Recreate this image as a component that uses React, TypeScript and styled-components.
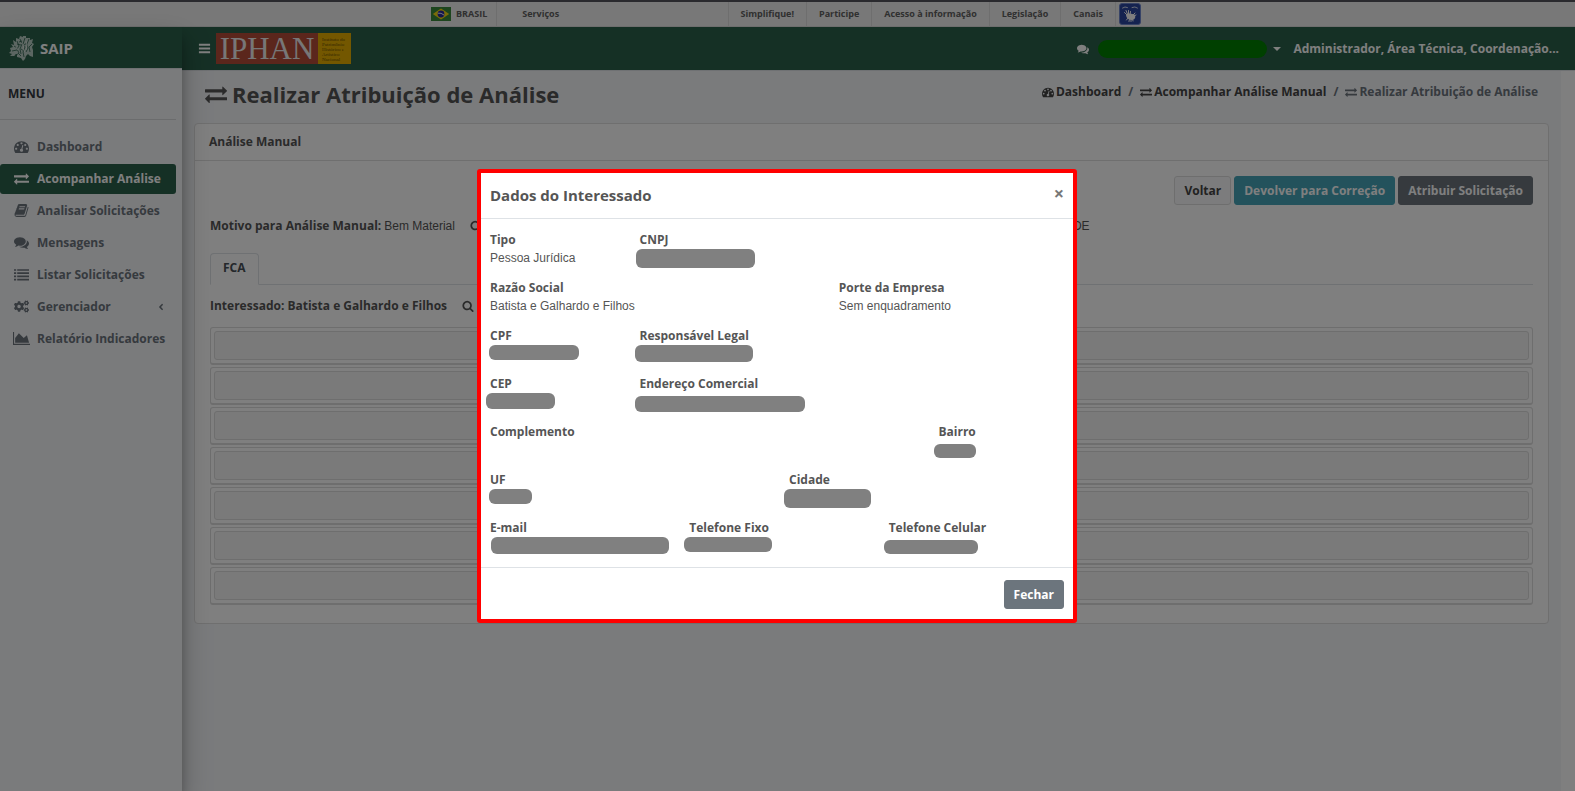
import React from "react";
import styled, { createGlobalStyle } from "styled-components";
import { FaCogs, FaAngleLeft } from "react-icons/fa";

const GlobalStyle = createGlobalStyle`
  *, *::before, *::after { box-sizing: border-box; }
  body {
    margin: 0;
    background: #fff;
    color: #555;
    font: 700 12px/18px "Open Sans", "Liberation Sans", sans-serif;
  }
  h1, h2, p, ul, ol, dl, dt, dd { margin: 0; padding: 0; }
  ul, ol { list-style: none; }
  a { color: inherit; text-decoration: none; }
  button { font: inherit; cursor: pointer; }
`;

/* ---------- icons ---------- */

const Glyph = styled.svg<{ $size: number }>`
  display: block;
  flex: none;
  height: ${(p) => p.$size}px;
  width: auto;
  fill: currentColor;
`;

const paths = {
  exchange:
    "M1792 1184v192q0 13-9.5 22.5t-22.5 9.5h-1376v192q0 13-9.5 22.5t-22.5 9.5q-12 0-24-10l-319-320q-9-9-9-22 0-14 9-23l320-320q9-9 23-9 13 0 22.5 9.5t9.5 22.5v192h1376q13 0 22.5 9.5t9.5 22.5zm0-544q0 14-9 23l-320 320q-9 9-23 9-13 0-22.5-9.5t-9.5-22.5v-192h-1376q-13 0-22.5-9.5t-9.5-22.5v-192q0-13 9.5-22.5t22.5-9.5h1376v-192q0-14 9-23t23-9q12 0 24 10l319 319q9 9 9 23z",
  dashboard:
    "M384 1152q0-53-37.5-90.5t-90.5-37.5-90.5 37.5-37.5 90.5 37.5 90.5 90.5 37.5 90.5-37.5 37.5-90.5zm192-448q0-53-37.5-90.5t-90.5-37.5-90.5 37.5-37.5 90.5 37.5 90.5 90.5 37.5 90.5-37.5 37.5-90.5zm428 481l101-382q6-26-7.5-48.5t-38.5-29.5-48 6.5-30 39.5l-101 382q-60 5-107 43.5t-63 98.5q-20 77 20 146t117 89 146-20 89-117q16-60-6-117t-72-91zm660-33q0-53-37.5-90.5t-90.5-37.5-90.5 37.5-37.5 90.5 37.5 90.5 90.5 37.5 90.5-37.5 37.5-90.5zm-640-640q0-53-37.5-90.5t-90.5-37.5-90.5 37.5-37.5 90.5 37.5 90.5 90.5 37.5 90.5-37.5 37.5-90.5zm448 192q0-53-37.5-90.5t-90.5-37.5-90.5 37.5-37.5 90.5 37.5 90.5 90.5 37.5 90.5-37.5 37.5-90.5zm320 448q0 261-141 483-19 29-54 29h-1402q-35 0-54-29-141-221-141-483 0-182 71-348t191-286 286-191 348-71 348 71 286 191 191 286 71 348z",
  book: "M1703 478q40 57 18 129l-275 906q-19 64-76.5 107.5t-122.5 43.5h-923q-77 0-148.5-53.5t-99.5-131.5q-24-67-2-127 0-4 3-27t4-37q1-8-3-21.5t-3-19.5q2-11 8-21t16.5-23.5 16.5-23.5q23-38 45-91.5t30-91.5q3-10 .5-30t-.5-28q3-11 17-28t17-23q21-36 42-92t25-90q1-9-2.5-32t.5-28q4-13 22-30.5t22-22.5q19-26 42.5-84.5t27.5-96.5q1-8-3-25.5t-2-26.5q2-8 9-18t18-23 17-21q8-12 16.5-30.5t15-35 16-36 19.5-32 26.5-23.5 36-11.5 47.5 5.5l-1 3q38-9 51-9h761q74 0 114 56t18 130l-274 906q-36 119-71.5 153.5t-128.5 34.5h-869q-27 0-38 15-11 16-1 43 24 70 144 70h923q29 0 56-15.5t35-41.5l300-987q7-22 5-57 38 15 59 43zm-1064 2q-4 13 2 22.5t20 9.5h608q13 0 25.5-9.5t16.5-22.5l21-64q4-13-2-22.5t-20-9.5h-608q-13 0-25.5 9.5t-16.5 22.5zm-83 256q-4 13 2 22.5t20 9.5h608q13 0 25.5-9.5t16.5-22.5l21-64q4-13-2-22.5t-20-9.5h-608q-13 0-25.5 9.5t-16.5 22.5z",
  comments:
    "M1408 768q0 139-94 257t-256.5 186.5-353.5 68.5q-86 0-176-16-124 88-278 128-36 9-86 16h-3q-11 0-20.5-8t-11.5-21q-1-3-1-6.5t.5-6.5 2-6l2.5-5 3.5-5.5 4-5 4.5-5 4-4.5q5-6 23-25t26-29.5 22.5-29 25-38.5 20.5-44q-124-72-195-177t-71-224q0-139 94-257t256.5-186.5 353.5-68.5 353.5 68.5 256.5 186.5 94 257zm384 256q0 120-71 224.5t-195 176.5q10 24 20.5 44t25 38.5 22.5 29 26 29.5 23 25q1 1 4 4.5t4.5 5 4 5 3.5 5.5l2.5 5 2 6 .5 6.5-1 6.5q-3 14-13 22t-22 7q-50-7-86-16-154-40-278-128-90 16-176 16-271 0-472-132 58 4 88 4 161 0 309-45t264-129q125-92 192-212t67-254q0-77-23-152 129 71 204 178t75 230z",
  search:
    "M1216 832q0-185-131.5-316.5t-316.5-131.5-316.5 131.5-131.5 316.5 131.5 316.5 316.5 131.5 316.5-131.5 131.5-316.5zm512 832q0 52-38 90t-90 38q-54 0-90-38l-343-342q-179 124-399 124-143 0-273.5-55.5t-225-150-150-225-55.5-273.5 55.5-273.5 150-225 225-150 273.5-55.5 273.5 55.5 225 150 150 225 55.5 273.5q0 220-124 399l343 343q37 37 37 90z",
  list: "M0 256h256v192h-256zM384 256h1408v192h-1408zM0 640h256v192h-256zM384 640h1408v192h-1408zM0 1024h256v192h-256zM384 1024h1408v192h-1408zM0 1408h256v192h-256zM384 1408h1408v192h-1408z",
  chart: "M2048 1536v128h-2048v-1536h128v1408h1920zm-384-1024l256 896h-1664v-576l448-576 576 576z",
  bars: "M128 256h1536v256h-1536zM128 768h1536v256h-1536zM128 1280h1536v256h-1536z",
};

type IconName = keyof typeof paths;

const Icon = ({ name, size = 13 }: { name: IconName; size?: number }) => (
  <Glyph $size={size} viewBox={name === "chart" ? "0 0 2048 1792" : "0 0 1792 1792"} aria-hidden="true">
    <path d={paths[name]} />
  </Glyph>
);

const Flag = () => (
  <Glyph $size={14} viewBox="0 0 20 14" aria-hidden="true">
    <rect width="20" height="14" fill="#3a8b3c" />
    <path d="M10 1.5 18.2 7 10 12.5 1.8 7z" fill="#f5d812" />
    <circle cx="10" cy="7" r="3.4" fill="#2a2a9c" />
    <path d="M6.8 6.2q3.4-.7 6.3 1.9" stroke="#fff" strokeWidth=".9" fill="none" />
  </Glyph>
);

const Crest = () => (
  <Glyph $size={26} viewBox="0 0 26 26" aria-hidden="true">
    <path
      fill="#b9cdc4"
      d="M14 1l3 0 0 2 4 0 0 2 3-1-1 4 2 1-2 3 1 3 0 7-3-1-2-2-2 2-1 3-2 2-2-3-4-1 0-3-3 2-4 0 2-2-3-1 2-2-1-3 3-1-2-3 3 1-1-5 3 2 0-4 3 1 1-3 3 1z"
    />
    <path
      fill="none"
      stroke="#2b604b"
      strokeWidth=".8"
      d="M8 6l2 5-2 3 2 4M5 11l3 2M3 16l5-1M11 4l2 5-2 5 1 5M16 3l-2 6 2 3-2 5 1 5M20 4l-2 5 1 4-2 4M23 9l-3 3 1 5M12 14l3 2M9 18l3 3M6 20l3-1M18 8l-3 2M8 9l4 1M10 7l3-1"
    />
    <path fill="none" stroke="#e6ece9" strokeWidth=".8" d="M12 8l3 2-1 4 2 3M17 6l1 4-1 5M7 12l2 3" />
  </Glyph>
);

const SignHands = () => (
  <Glyph $size={20} viewBox="0 0 20 20" aria-hidden="true">
    <g fill="none" stroke="#fff" strokeLinecap="round">
      <path strokeWidth=".8" d="M2.500 4q2.500-2 5-.5M12 3.500q3-1.500 5.500.5" />
      <path strokeWidth="1" d="M7 11 4.500 8.500M7.500 10 6 6.500M8.500 10V6.500M10 11l.5-3.500M13 11l2-2M14 12l2-1" />
      <path strokeWidth="1" d="M8 14l-1.500 2M9.500 14.500l-.5 3M11 14.500v3M12.500 14.500l.5 2.500" />
    </g>
    <path fill="#fff" d="M6 11q1-2 4-1.500l4.500 1q1.500 2 0 4.500-2.500 1.500-5 .5T6.500 13z" />
  </Glyph>
);

/* ---------- government bar ---------- */

const Page = styled.div`
  display: flex;
  flex-direction: column;
  min-height: 100vh;
`;

const GovBar = styled.header`
  display: flex;
  justify-content: center;
  height: 27px;
  border-top: 2px solid #55555c;
  border-bottom: 1px solid #dcdcdc;
  background: #f1f1f1;
  color: #606060;
  font-size: 9px;
  line-height: 24px;
`;

const GovInner = styled.div`
  display: flex;
  flex: 0 1 710px;
  justify-content: space-between;
  margin-right: 3px;
`;

const GovGroup = styled.nav`
  display: flex;
  align-items: stretch;
`;

const GovLink = styled.a<{ $brand?: boolean }>`
  display: flex;
  align-items: center;
  gap: 5px;
  padding: ${(p) => (p.$brand ? "0 9px 0 0" : "0 12px")};
  border-${(p) => (p.$brand ? "right" : "left")}: 1px solid #dcdcdc;
`;

const GovService = styled.a`
  margin-left: 25px;
`;

const Libras = styled.a`
  display: flex;
  align-items: center;
  justify-content: center;
  width: 22px;
  height: 22px;
  margin: 1px 0 0 3px;
  border: 1px solid #6f86cc;
  border-radius: 3px;
  background: #2a46a0;
`;

const GovEnd = styled.div`
  display: flex;
  border-left: 1px solid #dcdcdc;
`;

/* ---------- sidebar ---------- */

const Shell = styled.div`
  display: flex;
  flex: 1;
`;

const Sidebar = styled.aside`
  position: relative;
  flex: 0 0 182px;
  min-width: 0;
  background: #f4f6f9;
  box-shadow: 0 14px 28px rgba(0, 0, 0, 0.25), 0 10px 10px rgba(0, 0, 0, 0.22);
`;

const Brand = styled.a`
  display: flex;
  align-items: center;
  gap: 5px;
  height: 42px;
  padding-left: 9px;
  border-bottom: 1px solid #dee2e6;
  background: #2b604b;
  color: #fff;
  font-size: 15px;
`;

const MenuTitle = styled.p`
  margin-right: 6px;
  padding: 15px 8px;
  border-bottom: 1px solid #d6d8db;
  color: #343a40;
  line-height: 20px;
`;

const Menu = styled.ul`
  display: flex;
  flex-direction: column;
  gap: 2px;
  margin: 12px 6px 0 0;
`;

const MenuLink = styled.a<{ $active?: boolean }>`
  display: flex;
  align-items: center;
  height: 30px;
  padding: 0 10px 0 14px;
  border-radius: ${(p) => (p.$active ? "3px" : "0")};
  background: ${(p) => (p.$active ? "#2b604b" : "transparent")};
  color: ${(p) => (p.$active ? "#fff" : "#6c757d")};
  white-space: nowrap;
`;

const MenuIcon = styled.span`
  display: flex;
  justify-content: center;
  flex: 0 0 15px;
  width: 15px;
  margin: 0 8px 2px 0;
  font-size: 15px;
`;

const MenuArrow = styled.span`
  display: flex;
  margin-left: auto;
  font-size: 10px;
`;

/* ---------- main column ---------- */

const Main = styled.div`
  display: flex;
  flex: 1;
  flex-direction: column;
  min-width: 0;
`;

const Navbar = styled.div`
  display: flex;
  align-items: center;
  height: 44px;
  padding: 0 16px 0 16px;
  border-bottom: 1px solid #dee2e6;
  background: #2b604b;
  color: #fff;
`;

const IconButton = styled.button`
  display: flex;
  padding: 0;
  border: 0;
  background: none;
  color: inherit;
`;

const Logo = styled.a`
  display: flex;
  height: 31px;
  margin-left: 5px;
`;

const LogoName = styled.span`
  width: 102px;
  background: #b64c38;
  color: #eee;
  text-align: center;
  font: 400 31px/32px "Liberation Serif", serif;
`;

const LogoNote = styled.span`
  width: 33px;
  padding: 4px 0 0 4px;
  background: #e6ae00;
  color: #6b4f00;
  font: 400 5px/5px "Liberation Serif", serif;
  white-space: pre-line;
`;

const NavEnd = styled.div`
  display: flex;
  align-items: center;
  margin-left: auto;
`;

const UserButton = styled.button`
  display: flex;
  align-items: center;
  gap: 6px;
  margin: 0 12px 0 9px;
  padding: 0;
  border: 0;
  background: none;
  color: inherit;
`;

const UserMask = styled.span`
  width: 169px;
  height: 18px;
  border-radius: 9px;
  background: #008000;
`;

const Caret = styled.span`
  border: 4px solid transparent;
  border-top-color: currentColor;
  border-bottom: 0;
`;

const Content = styled.main`
  flex: 1;
  margin-right: 14px;
  padding: 8px 12px 0 12px;
  background: #f4f6f9;
`;

const PageHead = styled.div`
  display: flex;
  align-items: flex-start;
  justify-content: space-between;
  height: 44px;
  padding: 0 11px;
`;

const PageTitle = styled.h1`
  display: flex;
  align-items: center;
  gap: 5px;
  font-size: 22px;
  line-height: 30px;
`;

const Crumbs = styled.ol`
  display: flex;
  margin-top: 4px;
`;

const Crumb = styled.li<{ $current?: boolean }>`
  display: flex;
  align-items: center;
  color: ${(p) => (p.$current ? "#6c757d" : "#444")};

  &:not(:first-child)::before {
    content: "/";
    padding: 0 7px;
    color: #6c757d;
  }
`;

const CrumbLink = styled.a`
  display: flex;
  align-items: center;
  gap: 2px;
`;

const Card = styled.section`
  border: 1px solid #dfdfdf;
  border-radius: 4px;
  background: #fff;
`;

const CardHeader = styled.h2`
  padding: 9px 14px;
  border-bottom: 1px solid #dfdfdf;
  font-size: 12px;
  line-height: 18px;
`;

const CardBody = styled.div`
  padding: 15px 15px 18px;
`;

const Actions = styled.div`
  display: flex;
  justify-content: flex-end;
  gap: 3px;
`;

const tones = {
  light: ["#f8f9fa", "#ddd", "#444"],
  info: ["#46a4b8", "#46a4b8", "#fff"],
  secondary: ["#6c757d", "#6c757d", "#fff"],
};

const Button = styled.button<{ $tone: keyof typeof tones }>`
  height: 29px;
  padding: 0 9px;
  border: 1px solid ${(p) => tones[p.$tone][1]};
  border-radius: 3px;
  background: ${(p) => tones[p.$tone][0]};
  color: ${(p) => tones[p.$tone][2]};
  white-space: nowrap;
`;

const InfoLine = styled.p`
  display: flex;
  align-items: center;
  height: 18px;
`;

const Reason = styled(InfoLine)`
  margin: 12px 0 18px;
`;

const Plain = styled.span`
  margin-left: 3px;
  font: 400 12px/18px "Liberation Sans", Arial, sans-serif;
`;

const SearchButton = styled(IconButton)`
  margin-left: 15px;
`;

const ReasonEnd = styled(Plain)`
  margin-left: 591px;
`;

const Tabs = styled.div`
  display: flex;
  border-bottom: 1px solid #dee2e6;
`;

const Tab = styled.button`
  height: 32px;
  margin-bottom: -1px;
  padding: 0 12px 2px;
  border: 1px solid #dee2e6;
  border-bottom-color: #fff;
  border-radius: 4px 4px 0 0;
  background: #fff;
  color: #495057;
`;

const Interested = styled(InfoLine)`
  margin: 12px 0;
`;

const Stack = styled.div`
  display: flex;
  flex-direction: column;
  gap: 2px;
`;

const Panel = styled.div`
  padding: 3px;
  border: 1px solid #dcdcdc;
  border-bottom-width: 2px;
  border-radius: 3px;
`;

const PanelHeading = styled.div`
  height: 29px;
  border: 1px solid #dcdcdc;
  border-radius: 3px;
  background: #f5f5f5;
`;

/* ---------- dialog ---------- */

const Backdrop = styled.div`
  position: fixed;
  inset: 0;
  display: flex;
  align-items: flex-start;
  justify-content: center;
  padding: 169px 21px 0 0;
  background: rgba(0, 0, 0, 0.5);
`;

const Dialog = styled.section`
  width: 600px;
  max-width: 100%;
  border: 4px solid #f00;
  border-radius: 3px;
  background: #fff;
  overflow: hidden;
`;

const DialogHeader = styled.header`
  display: flex;
  align-items: center;
  justify-content: space-between;
  height: 46px;
  padding: 0 9px 2px;
  border-bottom: 1px solid #dee2e6;
`;

const DialogTitle = styled.h2`
  font-size: 15px;
  line-height: 24px;
`;

const Close = styled.button`
  padding: 0 0 4px;
  border: 0;
  background: none;
  color: #777;
  font-size: 18px;
  line-height: 18px;
`;

const Fields = styled.dl`
  display: grid;
  grid-template-columns: repeat(12, 1fr);
  grid-auto-rows: 48px;
  margin-right: -15px;
  padding: 12px 0 0 9px;
`;

const Field = styled.div<{ $start: number; $span: number }>`
  position: relative;
  grid-column: ${(p) => p.$start} / span ${(p) => p.$span};
`;

const Value = styled.dd`
  font: 400 12px/18px "Liberation Sans", Arial, sans-serif;
`;

const Mask = styled.dd<{ $left: number; $top: number; $w: number; $h: number }>`
  position: absolute;
  left: ${(p) => p.$left}px;
  top: ${(p) => p.$top}px;
  width: ${(p) => p.$w}px;
  height: ${(p) => p.$h}px;
  border-radius: 6px;
  background: #808080;
`;

const DialogFooter = styled.footer`
  display: flex;
  justify-content: flex-end;
  padding: 12px 9px 10px;
  border-top: 1px solid #dee2e6;
`;

/* ---------- data ---------- */

const menu: { label: string; icon: IconName | "cogs"; active?: boolean; more?: boolean }[] = [
  { label: "Dashboard", icon: "dashboard" },
  { label: "Acompanhar Análise", icon: "exchange", active: true },
  { label: "Analisar Solicitações", icon: "book" },
  { label: "Mensagens", icon: "comments" },
  { label: "Listar Solicitações", icon: "list" },
  { label: "Gerenciador", icon: "cogs", more: true },
  { label: "Relatório Indicadores", icon: "chart" },
];

const govLinks = ["Simplifique!", "Participe", "Acesso à informação", "Legislação", "Canais"];

type FieldData = {
  label: string;
  start: number;
  span: number;
  value?: string;
  mask?: [number, number, number, number];
};

const fields: FieldData[] = [
  { label: "Tipo", start: 1, span: 3, value: "Pessoa Jurídica" },
  { label: "CNPJ", start: 4, span: 9, mask: [-4, 18, 119, 19] },
  { label: "Razão Social", start: 1, span: 7, value: "Batista e Galhardo e Filhos" },
  { label: "Porte da Empresa", start: 8, span: 5, value: "Sem enquadramento" },
  { label: "CPF", start: 1, span: 3, mask: [-1, 18, 90, 15] },
  { label: "Responsável Legal", start: 4, span: 9, mask: [-5, 18, 118, 17] },
  { label: "CEP", start: 1, span: 3, mask: [-4, 18, 69, 16] },
  { label: "Endereço Comercial", start: 4, span: 9, mask: [-5, 21, 170, 16] },
  { label: "Complemento", start: 1, span: 9 },
  { label: "Bairro", start: 10, span: 3, mask: [-4, 21, 42, 14] },
  { label: "UF", start: 1, span: 6, mask: [-1, 18, 43, 15] },
  { label: "Cidade", start: 7, span: 6, mask: [-5, 18, 87, 19] },
  { label: "E-mail", start: 1, span: 4, mask: [1, 18, 178, 17] },
  { label: "Telefone Fixo", start: 5, span: 4, mask: [-5, 18, 88, 15] },
  { label: "Telefone Celular", start: 9, span: 4, mask: [-5, 21, 94, 14] },
];

export default function App() {
  return (
    <>
      <GlobalStyle />
      <Page>
        <GovBar>
          <GovInner>
            <GovGroup aria-label="Governo">
              <GovLink $brand href="#brasil">
                <Flag />
                BRASIL
              </GovLink>
              <GovService href="#servicos">Serviços</GovService>
            </GovGroup>
            <GovGroup aria-label="Portais">
              {govLinks.map((label) => (
                <GovLink key={label} href="#portal">
                  {label}
                </GovLink>
              ))}
              <GovEnd>
                <Libras href="#libras" aria-label="Libras">
                  <SignHands />
                </Libras>
              </GovEnd>
            </GovGroup>
          </GovInner>
        </GovBar>

        <Shell>
          <Sidebar>
            <Brand href="#inicio">
              <Crest />
              SAIP
            </Brand>
            <MenuTitle>MENU</MenuTitle>
            <nav>
              <Menu>
                {menu.map((item) => (
                  <li key={item.label}>
                    <MenuLink href="#menu" $active={item.active}>
                      <MenuIcon>{item.icon === "cogs" ? <FaCogs /> : <Icon name={item.icon} size={15} />}</MenuIcon>
                      {item.label}
                      {item.more && (
                        <MenuArrow>
                          <FaAngleLeft />
                        </MenuArrow>
                      )}
                    </MenuLink>
                  </li>
                ))}
              </Menu>
            </nav>
          </Sidebar>

          <Main>
            <Navbar>
              <IconButton aria-label="Alternar menu">
                <Icon name="bars" size={13} />
              </IconButton>
              <Logo href="#iphan">
                <LogoName>IPHAN</LogoName>
                <LogoNote>{"Instituto do\nPatrimônio\nHistórico e\nArtístico\nNacional"}</LogoNote>
              </Logo>
              <NavEnd>
                <IconButton aria-label="Mensagens">
                  <Icon name="comments" size={12} />
                </IconButton>
                <UserButton aria-label="Usuário">
                  <UserMask />
                  <Caret />
                </UserButton>
                <span>Administrador, Área Técnica, Coordenação...</span>
              </NavEnd>
            </Navbar>

            <Content>
              <PageHead>
                <PageTitle>
                  <Icon name="exchange" size={22} />
                  Realizar Atribuição de Análise
                </PageTitle>
                <Crumbs>
                  <Crumb>
                    <CrumbLink href="#dashboard">
                      <Icon name="dashboard" size={12} />
                      Dashboard
                    </CrumbLink>
                  </Crumb>
                  <Crumb>
                    <CrumbLink href="#acompanhar">
                      <Icon name="exchange" size={12} />
                      Acompanhar Análise Manual
                    </CrumbLink>
                  </Crumb>
                  <Crumb $current>
                    <CrumbLink href="#atribuir">
                      <Icon name="exchange" size={12} />
                      Realizar Atribuição de Análise
                    </CrumbLink>
                  </Crumb>
                </Crumbs>
              </PageHead>

              <Card>
                <CardHeader>Análise Manual</CardHeader>
                <CardBody>
                  <Actions>
                    <Button $tone="light">Voltar</Button>
                    <Button $tone="info">Devolver para Correção</Button>
                    <Button $tone="secondary">Atribuir Solicitação</Button>
                  </Actions>
                  <Reason>
                    Motivo para Análise Manual:
                    <Plain>Bem Material</Plain>
                    <SearchButton aria-label="Ver motivo">
                      <Icon name="search" size={12} />
                    </SearchButton>
                    <ReasonEnd>DE</ReasonEnd>
                  </Reason>
                  <Tabs role="tablist">
                    <Tab role="tab" aria-selected="true">
                      FCA
                    </Tab>
                  </Tabs>
                  <Interested>
                    Interessado: Batista e Galhardo e Filhos
                    <SearchButton aria-label="Ver interessado">
                      <Icon name="search" size={12} />
                    </SearchButton>
                  </Interested>
                  <Stack>
                    {Array.from({ length: 7 }, (_, i) => (
                      <Panel key={i}>
                        <PanelHeading />
                      </Panel>
                    ))}
                  </Stack>
                </CardBody>
              </Card>
            </Content>
          </Main>
        </Shell>
      </Page>

      <Backdrop>
        <Dialog role="dialog" aria-modal="true" aria-labelledby="dialog-title">
          <DialogHeader>
            <DialogTitle id="dialog-title">Dados do Interessado</DialogTitle>
            <Close aria-label="Fechar janela">×</Close>
          </DialogHeader>
          <Fields>
            {fields.map((f) => (
              <Field key={f.label} $start={f.start} $span={f.span}>
                <dt>{f.label}</dt>
                {f.value && <Value>{f.value}</Value>}
                {f.mask && <Mask $left={f.mask[0]} $top={f.mask[1]} $w={f.mask[2]} $h={f.mask[3]} />}
              </Field>
            ))}
          </Fields>
          <DialogFooter>
            <Button $tone="secondary">Fechar</Button>
          </DialogFooter>
        </Dialog>
      </Backdrop>
    </>
  );
}
